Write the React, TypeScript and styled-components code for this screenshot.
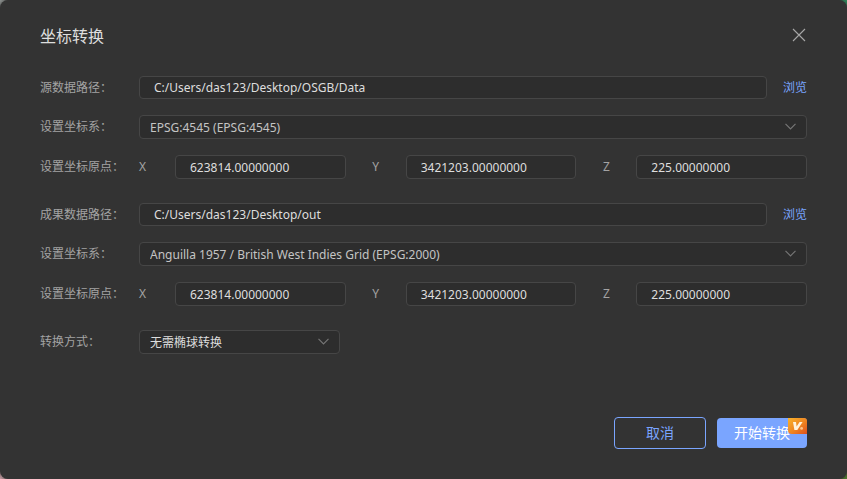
import React, { useId, useState } from "react";
import styled, { createGlobalStyle, css } from "styled-components";

const GlobalStyle = createGlobalStyle`
  *, *::before, *::after { box-sizing: border-box; }
  body {
    margin: 0;
    background:
      radial-gradient(circle at 0 0, #8e9290 0, transparent 12px),
      radial-gradient(circle at 100% 0, #2f8a5c 0, transparent 12px),
      radial-gradient(circle at 0 100%, #c79ea4 0, transparent 12px),
      radial-gradient(circle at 100% 100%, #4f7a2c 0, transparent 12px),
      #2b2d2c;
  }
  body, button, input, select {
    font-family: "Noto Sans", "Noto Sans CJK SC", sans-serif;
  }
`;

const Dialog = styled.form`
  display: flex;
  flex-direction: column;
  min-height: 100vh;
  padding: 24px 40px 30px;
  border-radius: 8px;
  background: #333333;
  color: #dedede;
  font-size: 12px;
`;

const Header = styled.header`
  display: flex;
  align-items: center;
  justify-content: space-between;
  height: 24px;
  margin-bottom: 28px;
`;

const Title = styled.h1`
  margin: 0;
  font-size: 16px;
  line-height: 24px;
  font-weight: 400;
`;

const CloseButton = styled.button`
  display: flex;
  padding: 0;
  border: 0;
  background: none;
  color: #a8a8a8;
  cursor: pointer;
`;

const Sections = styled.div`
  display: flex;
  flex-direction: column;
  gap: 24px;
  margin-bottom: 24px;
`;

const Section = styled.div`
  display: flex;
  flex-direction: column;
  gap: 16px;
`;

const Row = styled.div`
  display: grid;
  grid-template-columns: 99px 1fr;
  align-items: center;
`;

const labelText = css`
  color: #a3a3a3;
  font-size: 12px;
  line-height: 20px;
`;

const RowLabel = styled.label`
  ${labelText}
`;

const RowCaption = styled.span`
  ${labelText}
`;

const AxisLabel = styled.label<{ $first?: boolean }>`
  ${labelText}
  text-align: ${(p) => (p.$first ? "left" : "center")};
`;

const box = css`
  width: 100%;
  min-width: 0;
  border: 1px solid #464646;
  border-radius: 4px;
  background: #2d2d2d;
  font-size: 12px;
  outline: none;
  &:focus-visible { border-color: #7aa5ff; }
`;

const TextInput = styled.input<{ $height: number }>`
  ${box}
  height: ${(p) => p.$height}px;
  padding: 0 14px;
  color: #dedede;
`;

const PathLine = styled.div`
  display: grid;
  grid-template-columns: 1fr auto;
  gap: 16px;
  align-items: center;
  height: 23px;
`;

const BrowseButton = styled.button`
  padding: 0;
  border: 0;
  background: none;
  color: #7aa5ff;
  font-size: 12px;
  line-height: 20px;
  cursor: pointer;
`;

const SelectWrap = styled.div<{ $compact?: boolean }>`
  position: relative;
  width: ${(p) => (p.$compact ? "201px" : "100%")};
`;

const SelectBox = styled.select<{ $bright?: boolean }>`
  ${box}
  display: block;
  appearance: none;
  height: 24px;
  padding: 0 32px 0 10px;
  color: ${(p) => (p.$bright ? "#dedede" : "#c4c4c4")};
`;

const SelectArrow = styled.svg`
  position: absolute;
  top: 8px;
  right: 11px;
  pointer-events: none;
`;

const AxisLine = styled.div`
  display: grid;
  grid-template-columns: 36px 1fr 60px 1fr 60px 1fr;
  align-items: center;
  height: 24px;
`;

const Footer = styled.footer`
  display: flex;
  align-items: center;
  justify-content: flex-end;
  gap: 11px;
  margin-top: auto;
`;

const ActionButton = styled.button<{ $primary?: boolean }>`
  position: relative;
  padding: 0;
  width: ${(p) => (p.$primary ? 90 : 92)}px;
  height: ${(p) => (p.$primary ? 30 : 32)}px;
  border: ${(p) => (p.$primary ? "0" : "1px solid #7aa5ff")};
  border-radius: 4px;
  background: ${(p) => (p.$primary ? "#7aa5ff" : "transparent")};
  color: ${(p) => (p.$primary ? "#ffffff" : "#7aa5ff")};
  font-size: 14px;
  line-height: 20px;
  cursor: pointer;
`;

const VipBadge = styled.svg`
  position: absolute;
  top: 0;
  right: 0;
`;

function Chevron() {
  return (
    <SelectArrow width="11" height="7" viewBox="0 0 11 7" fill="none" stroke="#757575" strokeWidth="1.2" aria-hidden="true">
      <path d="M0.5 0.8 5.5 5.8 10.5 0.8" />
    </SelectArrow>
  );
}

function PathRow({ label, initial }: { label: string; initial: string }) {
  const id = useId();
  const [value, setValue] = useState(initial);
  return (
    <Row>
      <RowLabel htmlFor={id}>{label}</RowLabel>
      <PathLine>
        <TextInput $height={23} id={id} value={value} onChange={(e) => setValue(e.target.value)} />
        <BrowseButton type="button">浏览</BrowseButton>
      </PathLine>
    </Row>
  );
}

interface SelectRowProps {
  label: string;
  option: string;
  compact?: boolean;
}

function SelectRow({ label, option, compact }: SelectRowProps) {
  const id = useId();
  return (
    <Row>
      <RowLabel htmlFor={id}>{label}</RowLabel>
      <SelectWrap $compact={compact}>
        <SelectBox id={id} $bright={compact}>
          <option>{option}</option>
        </SelectBox>
        <Chevron />
      </SelectWrap>
    </Row>
  );
}

const origin = [
  { axis: "X", value: "623814.00000000" },
  { axis: "Y", value: "3421203.00000000" },
  { axis: "Z", value: "225.00000000" },
];

function OriginRow() {
  const id = useId();
  const [values, setValues] = useState(origin.map((o) => o.value));
  return (
    <Row role="group" aria-labelledby={id}>
      <RowCaption id={id}>设置坐标原点：</RowCaption>
      <AxisLine>
        {origin.map(({ axis }, i) => (
          <React.Fragment key={axis}>
            <AxisLabel $first={i === 0} htmlFor={id + axis}>{axis}</AxisLabel>
            <TextInput
              $height={24}
              id={id + axis}
              value={values[i]}
              onChange={(e) => setValues(values.map((v, j) => (j === i ? e.target.value : v)))}
            />
          </React.Fragment>
        ))}
      </AxisLine>
    </Row>
  );
}

export default function App() {
  return (
    <>
      <GlobalStyle />
      <Dialog onSubmit={(e) => e.preventDefault()}>
        <Header>
          <Title>坐标转换</Title>
          <CloseButton type="button" aria-label="关闭">
            <svg width="16" height="16" viewBox="0 0 16 16" fill="none" stroke="currentColor" strokeWidth="1.1">
              <path d="M2 1 14 13M14 1 2 13" />
            </svg>
          </CloseButton>
        </Header>
        <Sections>
          <Section>
            <PathRow label="源数据路径：" initial="C:/Users/das123/Desktop/OSGB/Data" />
            <SelectRow label="设置坐标系：" option="EPSG:4545 (EPSG:4545)" />
            <OriginRow />
          </Section>
          <Section>
            <PathRow label="成果数据路径：" initial="C:/Users/das123/Desktop/out" />
            <SelectRow label="设置坐标系：" option="Anguilla 1957 / British West Indies Grid (EPSG:2000)" />
            <OriginRow />
          </Section>
          <SelectRow label="转换方式：" option="无需椭球转换" compact />
        </Sections>
        <Footer>
          <ActionButton type="button">取消</ActionButton>
          <ActionButton type="submit" $primary>
            开始转换
            <VipBadge width="19" height="16" viewBox="0 0 19 16" aria-hidden="true">
              <defs>
                <linearGradient id="vipFill" x1="0" y1="0" x2="1" y2="1">
                  <stop offset="0" stopColor="#f9b32c" />
                  <stop offset="0.55" stopColor="#ef8420" />
                  <stop offset="1" stopColor="#dc4f1f" />
                </linearGradient>
              </defs>
              <path d="M0 0H16A3 3 0 0 1 19 3V16H4A4 4 0 0 1 0 12Z" fill="url(#vipFill)" />
              <path d="M5 4H8L8.6 8.4 11.6 4H14.6L9.3 12H6.4Z" fill="#fff3dc" />
              <circle cx="13.6" cy="10.4" r="1.4" fill="#ffc48c" />
            </VipBadge>
          </ActionButton>
        </Footer>
      </Dialog>
    </>
  );
}
